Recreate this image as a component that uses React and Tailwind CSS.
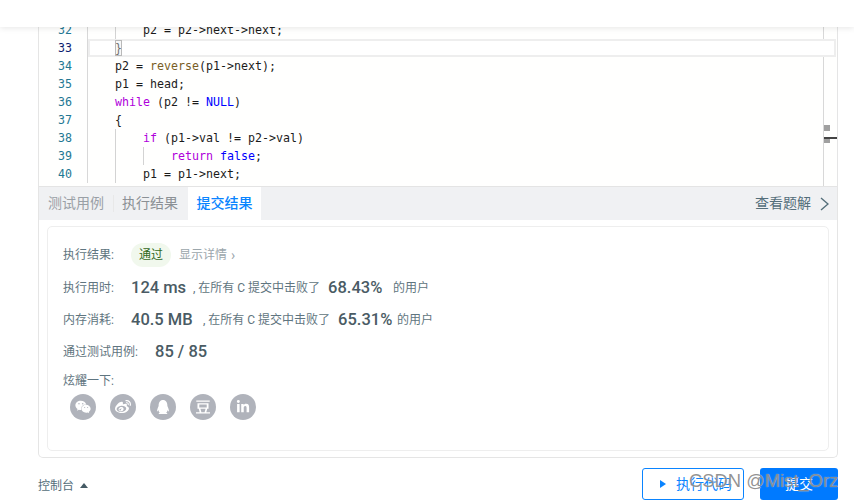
import { FaWeixin, FaWeibo, FaQq, FaLinkedinIn } from "react-icons/fa";
import { SiDouban } from "react-icons/si";

const cjk = "font-['Roboto','Noto_Sans_CJK_SC',sans-serif]";

const lines = [
  { n: 32, guides: [115], parts: [["        p2 = p2->next->next;", "text-[#1b1b1b]"]] },
  { n: 33, active: true, parts: [["    }", "text-[#1b1b1b]"]] },
  {
    n: 34,
    parts: [
      ["    p2 = ", "text-[#1b1b1b]"],
      ["reverse", "text-[#795e26]"],
      ["(p1->next);", "text-[#1b1b1b]"],
    ],
  },
  { n: 35, parts: [["    p1 = head;", "text-[#1b1b1b]"]] },
  {
    n: 36,
    parts: [
      ["    ", ""],
      ["while", "text-[#af00db]"],
      [" (p2 != ", "text-[#1b1b1b]"],
      ["NULL", "text-[#0000ff]"],
      [")", "text-[#1b1b1b]"],
    ],
  },
  { n: 37, parts: [["    {", "text-[#1b1b1b]"]] },
  {
    n: 38,
    guides: [115],
    parts: [
      ["        ", ""],
      ["if", "text-[#af00db]"],
      [" (p1->val != p2->val)", "text-[#1b1b1b]"],
    ],
  },
  {
    n: 39,
    guides: [115, 143],
    parts: [
      ["            ", ""],
      ["return", "text-[#af00db]"],
      [" ", ""],
      ["false", "text-[#0000ff]"],
      [";", "text-[#1b1b1b]"],
    ],
  },
  { n: 40, guides: [115], parts: [["        p1 = p1->next;", "text-[#1b1b1b]"]] },
];

function CodeLine({ line }) {
  return (
    <div className="flex h-[18px] leading-[18px]">
      <div className={`w-[48px] shrink-0 pr-[15px] text-right ${line.active ? "text-[#0b216f]" : "text-[#237893]"}`}>{line.n}</div>
      <div className="relative flex-1 border-l border-[#d8d8d8]">
        {line.active && <div className="absolute -right-[13px] left-0 top-0 z-10 h-[18px] border-2 border-[#eeeeee] bg-white" />}
        {(line.guides || []).map((x) => (
          <div key={x} className="absolute top-0 h-[18px] w-px bg-[#d3d3d3]" style={{ left: x - 88 }} />
        ))}
        <div className="relative z-20 -ml-px whitespace-pre">
          {line.parts.map(([text, color], i) => (
            <span key={i} className={color}>
              {text}
            </span>
          ))}
          {line.active && <div className="absolute left-[28px] top-[1px] h-[16px] w-[7px] border border-[#b9b9b9] bg-[#eaeaea]/40" />}
        </div>
      </div>
    </div>
  );
}

function Editor() {
  return (
    <div className="flex h-[159px] overflow-hidden bg-[#fffffe]">
      <div className="w-[784px] shrink-0 -mt-[6px] font-['DejaVu_Sans_Mono',monospace] text-[11.63px]">
        {lines.map((line) => (
          <CodeLine key={line.n} line={line} />
        ))}
      </div>
      <div className="relative flex-1 border-l border-[#d8d8d8]">
        <div className="absolute left-0 top-[98px] size-[6px] bg-[#a0a0a0]" />
        <div className="absolute left-0 top-[110px] size-[6px] bg-[#a0a0a0]" />
        <div className="absolute left-0 top-[110px] h-[2px] w-[14px] bg-[#444444]" />
      </div>
    </div>
  );
}

function Tabs() {
  return (
    <div className="flex h-[34px] items-stretch border-t border-[#e4e4e4] bg-[#f0f1f3] text-[14px] leading-[33px]">
      <div className="w-[75px] pl-[9px] text-[#9aa0a6]">测试用例</div>
      <div className="my-[8px] -ml-px w-px bg-[#e8e8e8]" />
      <div className="w-[74px] pl-[8px] text-[#8b9095]">执行结果</div>
      <div className="w-[73px] bg-white text-center font-medium text-[#0a84ff]">提交结果</div>
      <div className="ml-auto flex items-center pr-[8px] text-[#546e7a]">
        查看题解
        <svg className="ml-[9px] h-[14px] w-[9px]" viewBox="0 0 9 14" fill="none" stroke="currentColor" strokeWidth="1.4">
          <path d="M1 1l7 6-7 6" />
        </svg>
      </div>
    </div>
  );
}

function Stat({ label, labelWidth = "w-[68px]", value, valueWidth, pct, pctWidth }) {
  return (
    <div className="flex h-[32px] items-center text-[12px] text-[#5f7580]">
      <div className={`${labelWidth} shrink-0`}>{label}</div>
      <span className={`${valueWidth} shrink-0 text-[16.5px] font-medium text-[#4a5b64]`}>{value}</span>
      {pct && (
        <>
          <span>, 在所有 C 提交中击败了</span>
          <span className={`ml-[8px] ${pctWidth} shrink-0 text-[16.5px] font-medium text-[#4a5b64]`}>{pct}</span>
          <span>的用户</span>
        </>
      )}
    </div>
  );
}

const shareIcons = [
  <FaWeixin key="wx" className="size-[16px]" />,
  <FaWeibo key="wb" className="size-[16px]" />,
  <FaQq key="qq" className="size-[14px]" />,
  <SiDouban key="db" className="size-[14px]" />,
  <FaLinkedinIn key="in" className="size-[14px]" />,
];

function ResultCard() {
  return (
    <div className="h-[225px] rounded-[5px] border border-[#eeeeee] pl-[15px] pt-[12px]">
      <div className="mb-[1px] flex h-[32px] items-center text-[12px] text-[#5f7580]">
        <div className="w-[68px] shrink-0">执行结果:</div>
        <div className="flex h-[24px] w-[40px] items-center justify-center rounded-full bg-[#f1f8ed] text-[#33691e]">通过</div>
        <div className="ml-[8px] flex items-center text-[#9ba6ac]">
          显示详情
          <span className="ml-[4px] text-[14px] leading-none">›</span>
        </div>
      </div>
      <Stat label="执行用时:" value="124 ms" valueWidth="w-[62px]" pct="68.43%" pctWidth="w-[65px]" />
      <Stat label="内存消耗:" value="40.5 MB" valueWidth="w-[72px]" pct="65.31%" pctWidth="w-[59px]" />
      <Stat label="通过测试用例:" labelWidth="w-[92px]" value="85 / 85" />
      <div className="flex h-[25px] items-center text-[12px] text-[#5f7580]">炫耀一下:</div>
      <div className="ml-[7px] mt-[1px] flex gap-[14px]">
        {shareIcons.map((icon) => (
          <div key={icon.key} className="flex size-[26px] items-center justify-center rounded-full bg-[#b0b3bb] text-white">
            {icon}
          </div>
        ))}
      </div>
    </div>
  );
}

function Footer() {
  return (
    <div className="mx-[38px] mt-[10px] flex h-[32px] w-[800px] items-center">
      <div className="mt-[3px] flex items-center text-[12px] text-[#546e7a]">
        控制台
        <div className="ml-[6px] size-0 border-x-[4px] border-b-[5px] border-x-transparent border-b-[#455a64]" />
      </div>
      <button className="ml-auto flex h-[32px] w-[102px] items-center rounded-[3px] border border-[#0a84ff] pl-[17px] text-[14px] text-[#0a84ff]">
        <div className="mr-[10px] size-0 border-y-[4px] border-l-[6px] border-y-transparent border-l-[#0a84ff]" />
        执行代码
      </button>
      <button className="ml-[16px] h-[32px] w-[78px] rounded-[3px] bg-[#007aff] text-[14px] text-white">提交</button>
    </div>
  );
}

export default function App() {
  return (
    <div className={`relative h-[501px] w-[854px] overflow-hidden bg-white ${cjk}`}>
      <div className="relative z-30 h-[27px] bg-white shadow-[0_1px_6px_rgba(0,0,0,0.1)]" />
      <div className="ml-[38px] w-[800px] rounded-b-[5px] border-x border-b border-[#e5e5e5]">
        <Editor />
        <Tabs />
        <div className="px-[8px] pb-[6px] pt-[6px]">
          <ResultCard />
        </div>
      </div>
      <Footer />
      <div className="absolute left-[689px] top-[467px] font-['Liberation_Sans',sans-serif] text-[18.4px] text-[#808080]/85 [text-shadow:0_0_1px_rgba(255,255,255,0.7)]">CSDN @Mist_Orz</div>
    </div>
  );
}
